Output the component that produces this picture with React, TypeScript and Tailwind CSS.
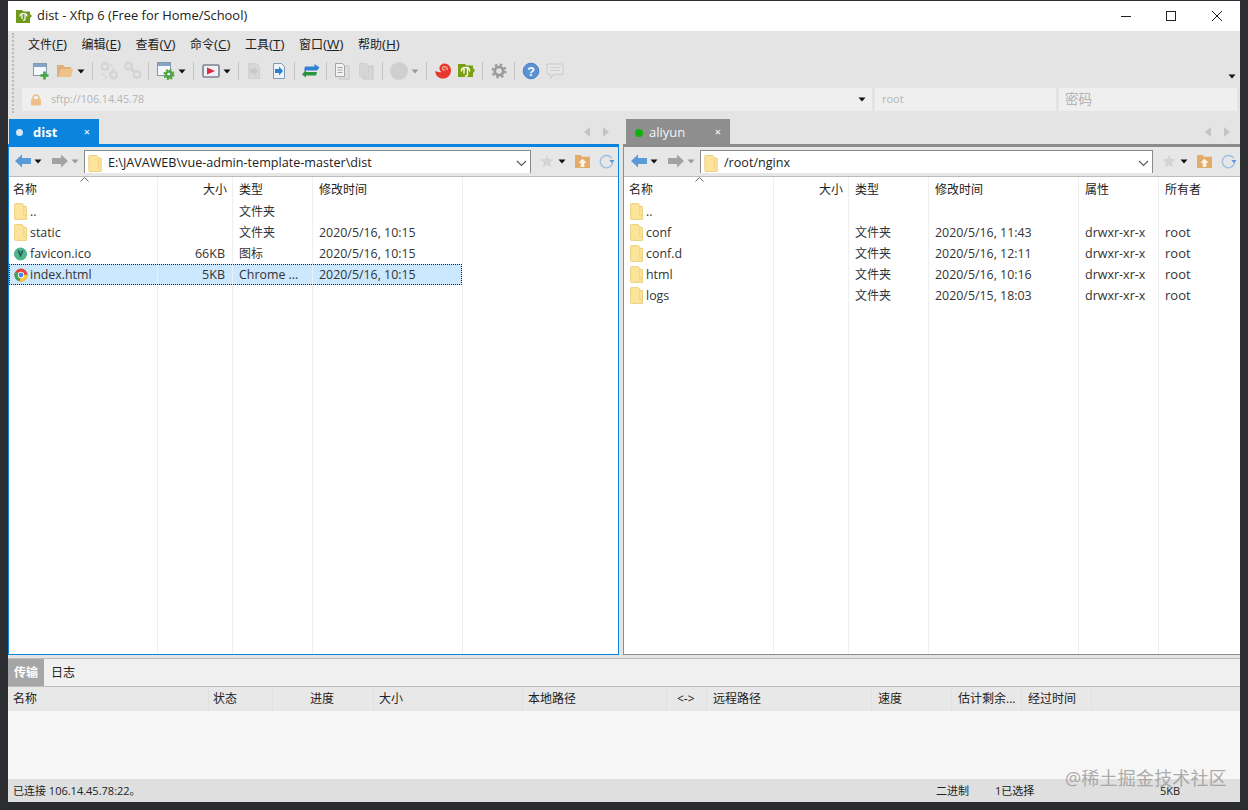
import React from "react";

const Folder = ({ className = "", w = 14, h = 18 }: { className?: string; w?: number; h?: number }) => (
  <svg width={w} height={h} viewBox="0 0 14 18" className={className}>
    <path d="M1.500.5H9l1.500 2v1H13.500v14h-12a1 1 0 0 1-1-1v-15a1 1 0 0 1 1-1z" fill="#fde49c" stroke="#e9cd7c" />
    <path d="M10.500 3.500v10h3" fill="none" stroke="#ecd27f" />
  </svg>
);

const Caret = ({ gray = false }: { gray?: boolean }) => (
  <svg width="8" height="5" viewBox="0 0 8 5"><path d="M.5.5h7L4 4.500z" fill={gray ? "#9a9a9a" : "#111"} /></svg>
);

const Sep = ({ className = "" }: { className?: string }) => <div className={`h-[18px] w-px bg-[#c4c4c4] ${className}`} />;

const NewIcon = () => (
  <svg width="20" height="20" viewBox="0 0 20 20">
    <rect x="3.500" y="2.500" width="13" height="12" fill="#f4f7fb" stroke="#8497ad" />
    <rect x="4" y="3" width="12" height="3" fill="#85a3c5" />
    <path d="M14.500 10.500v8M10.500 14.500h8" stroke="#3aa83a" strokeWidth="2.600" />
  </svg>
);
const OpenIcon = () => (
  <svg width="20" height="20" viewBox="0 0 20 20">
    <path d="M2 4h6l2 2h6v2H6l-2 8H2z" fill="#dcae78" />
    <path d="M6 8h12l-2 8H3z" fill="#eec08a" />
  </svg>
);
const LinkBroken = () => (
  <svg width="20" height="20" viewBox="0 0 20 20">
    <g fill="none" stroke="#d4d4d4">
      <circle cx="6" cy="5.500" r="3.300" strokeWidth="2.400" />
      <circle cx="14.500" cy="14" r="3.300" strokeWidth="2.400" />
      <path d="M11.500 4.500l2-1M13 8h2.500M3 13.500h2.500M6 17l2-1.500" strokeWidth="1.600" />
    </g>
  </svg>
);
const LinkJoined = () => (
  <svg width="20" height="20" viewBox="0 0 20 20">
    <g fill="none" stroke="#d4d4d4">
      <circle cx="5.500" cy="5" r="3.300" strokeWidth="2.400" />
      <circle cx="14" cy="13.500" r="3.300" strokeWidth="2.400" />
      <path d="M8 7.500l3.500 3.500" strokeWidth="2.600" />
    </g>
  </svg>
);
const SessionGear = () => (
  <svg width="20" height="20" viewBox="0 0 20 20">
    <rect x="1.500" y="1.500" width="13" height="13" fill="#f4f7fb" stroke="#8497ad" />
    <rect x="2" y="2" width="12" height="3" fill="#85a3c5" />
    <circle cx="13" cy="13.500" r="3" fill="none" stroke="#4ea53c" strokeWidth="2.400" />
    <circle cx="13" cy="13.500" r="4.800" fill="none" stroke="#4ea53c" strokeWidth="1.500" strokeDasharray="2 1.770" />
  </svg>
);
const Play = () => (
  <svg width="20" height="20" viewBox="0 0 20 20">
    <rect x="2" y="4" width="16" height="12" rx="1.500" fill="#eef0f3" stroke="#7b828c" strokeWidth="1.600" />
    <path d="M6 6.500l8 3.500-8 3.500z" fill="#dc2a42" />
  </svg>
);
const Doc = ({ active = false }: { active?: boolean }) => (
  <svg width="20" height="20" viewBox="0 0 20 20">
    <path d="M4.500 2.500h8l3 3v12h-11z" fill={active ? "#eef3f9" : "#d8d8d8"} stroke={active ? "#7d98b8" : "#d0d0d0"} />
    <path d="M6 8h4V5.500l4 4.500-4 4.500V12H6z" fill={active ? "#2f7fd0" : "#c8c8c8"} />
  </svg>
);
const Transfer = () => (
  <svg width="20" height="20" viewBox="0 0 20 20">
    <path d="M4 5.500h9.500V3l5 3.500-2.500 3H3z" fill="#2f83d4" />
    <path d="M16 11H5V8.800L1 13.500 5 16.500V14.500h10z" fill="#27953f" />
  </svg>
);
const Copy = ({ filled = false }: { filled?: boolean }) => (
  <svg width="20" height="20" viewBox="0 0 20 20">
    <rect x="7" y="5" width="10" height="13" fill={filled ? "#d6d6d6" : "#dedede"} stroke="#c8c8c8" />
    <path d="M3.500 2.500h7l2 2v11h-9z" fill={filled ? "#d6d6d6" : "#f2f2f2"} stroke={filled ? "#d0d0d0" : "#a5a5a5"} />
    {!filled && <path d="M5.500 6.500h5M5.500 9h5M5.500 11.500h5" stroke="#a5a5a5" />}
  </svg>
);
const Snail = () => (
  <svg width="20" height="20" viewBox="0 0 20 20">
    <path d="M2 10c.5 3.500 2.500 7 7 7.500 5 .5 9-3 9-8 0-4-3-7-6.500-7-3 0-5.500 2.500-5 5.500.2 1.500 1 2.500 2 3-2.500.5-4.500 0-6.500-1z" fill="#e6392c" />
    <path d="M14.500 9c0-2-1.500-3.500-3.300-3.300C9.500 5.900 9 7.500 10 8.600c.8.800 2 .5 2.200-.5" fill="none" stroke="#f7b3a6" strokeWidth="1.200" />
  </svg>
);
const GreenFolder = () => (
  <svg width="20" height="20" viewBox="0 0 20 20">
    <path d="M2 3h7l1.500 1.500H17V7l2 2.500-2 2.500v4H2z" fill="#7a9f14" />
    <path d="M8 7.500v5M11.500 7v6.500c0 1.200-1.300 1.800-2.500 1.300M5.500 10.500C5 8.500 6.500 6.500 9 6.500h1.500c2 0 3.500 1.800 3 4" fill="none" stroke="#fff" strokeWidth="1.400" />
  </svg>
);
const Gear = () => (
  <svg width="20" height="20" viewBox="0 0 20 20">
    <circle cx="10" cy="10" r="4.200" fill="none" stroke="#9b9b9b" strokeWidth="2.800" />
    <circle cx="10" cy="10" r="6.500" fill="none" stroke="#9b9b9b" strokeWidth="2" strokeDasharray="2.550 2.550" />
  </svg>
);
const Help = () => (
  <svg width="20" height="20" viewBox="0 0 20 20">
    <circle cx="10" cy="10" r="7.800" fill="#5c92d2" stroke="#4a80c2" />
    <text x="10" y="14.500" textAnchor="middle" fontSize="12.500" fontWeight="700" fill="#fff" fontFamily="Liberation Sans, sans-serif">?</text>
  </svg>
);
const Chat = () => (
  <svg width="20" height="20" viewBox="0 0 20 20">
    <path d="M3.500 3h13a1.500 1.500 0 0 1 1.500 1.500V12a1.500 1.500 0 0 1-1.500 1.500H9L5.500 17v-3.500h-2A1.500 1.500 0 0 1 2 12V4.500A1.500 1.500 0 0 1 3.500 3z" fill="#e6e6e6" stroke="#d2d2d2" strokeWidth="1.400" />
    <path d="M5 6.500h10M5 9.500h10" stroke="#d2d2d2" />
  </svg>
);
const ArrowL = ({ c }: { c: string }) => (
  <svg width="16" height="14" viewBox="0 0 16 14"><path d="M0 7l7-6.500V4h9v6H7v3.500z" fill={c} /></svg>
);
const ArrowR = ({ c }: { c: string }) => (
  <svg width="16" height="14" viewBox="0 0 16 14"><path d="M16 7L9 .5V4H0v6h9v3.500z" fill={c} /></svg>
);
const Chevron = () => (
  <svg width="11" height="7" viewBox="0 0 11 7"><path d="M1 1l4.500 4.500L10 1" fill="none" stroke="#555" strokeWidth="1.100" /></svg>
);
const Star = () => (
  <svg width="14" height="14" viewBox="0 0 16 16"><path d="M8 .8l2.200 4.900 5.300.6-4 3.500 1.200 5.300L8 12.300l-4.700 2.800 1.200-5.300-4-3.500 5.300-.6z" fill="#d4d4d4" /></svg>
);
const FolderUp = () => (
  <svg width="15" height="14" viewBox="0 0 16 15">
    <path d="M0 1h6l1.500 2H16v12H0z" fill="#e2ab68" />
    <path d="M8 5l4.500 4.500H10V14H6V9.500H3.500z" fill="#fdf4e6" />
  </svg>
);
const Refresh = () => (
  <svg width="15" height="15" viewBox="0 0 16 16">
    <path d="M13.500 4.500A6.600 6.600 0 1 0 14.500 9.500" fill="none" stroke="#9dbfe3" strokeWidth="1.500" />
    <path d="M11 6.500h5.500L14 10z" fill="#5a98dc" />
  </svg>
);
const Vue = () => (
  <svg width="14" height="14" viewBox="0 0 14 14">
    <circle cx="6.500" cy="7" r="6.500" fill="#4ab68a" />
    <path d="M3.500 3.500h1.800L6.500 7l1.200-3.500h1.800L6.500 10.500z" fill="#35495e" />
  </svg>
);
const ChromeIcon = () => (
  <svg width="14" height="14" viewBox="0 0 15 15">
    <circle cx="7.500" cy="7.500" r="7" fill="#e3443a" />
    <path d="M7.500 7.500L1.400 4.100A7 7 0 0 0 6 14.300z" fill="#3ba55d" />
    <path d="M7.500 7.500l7-.4a7 7 0 0 1-8.500 7.200z" fill="#f7c933" />
    <circle cx="7.500" cy="7.500" r="3.400" fill="#fff" />
    <circle cx="7.500" cy="7.500" r="2.600" fill="#4a86e8" />
  </svg>
);

type Row = { name: string; icon?: React.ReactNode; size?: string; type?: string; time?: string; attr?: string; owner?: string; sel?: boolean };

const leftRows: Row[] = [
  { name: "..", type: "文件夹" },
  { name: "static", type: "文件夹", time: "2020/5/16, 10:15" },
  { name: "favicon.ico", icon: <Vue />, size: "66KB", type: "图标", time: "2020/5/16, 10:15" },
  { name: "index.html", icon: <ChromeIcon />, size: "5KB", type: "Chrome ...", time: "2020/5/16, 10:15", sel: true },
];
const rightRows: Row[] = [
  { name: ".." },
  { name: "conf", type: "文件夹", time: "2020/5/16, 11:43", attr: "drwxr-xr-x", owner: "root" },
  { name: "conf.d", type: "文件夹", time: "2020/5/16, 12:11", attr: "drwxr-xr-x", owner: "root" },
  { name: "html", type: "文件夹", time: "2020/5/16, 10:16", attr: "drwxr-xr-x", owner: "root" },
  { name: "logs", type: "文件夹", time: "2020/5/15, 18:03", attr: "drwxr-xr-x", owner: "root" },
];

const line = "border-r border-[#efefef]";

const Cell = ({ w, children, className = "" }: { w: string; children?: React.ReactNode; className?: string }) => (
  <div className={`${w} shrink-0 h-full ${line} flex items-center whitespace-nowrap overflow-hidden ${className}`}>{children}</div>
);

const Pane = ({ rows, path, right }: { rows: Row[]; path: string; right?: boolean }) => {
  const w1 = right ? "w-[150px]" : "w-[149px]";
  const w2 = "w-[75px]";
  const w3 = "w-[80px]";
  const w4 = "w-[150px]";
  const w5 = "w-[80px]";
  return (
    <div className="flex flex-col h-full bg-white">
      <div className="h-[30px] flex items-center bg-[#e7e7e7] shrink-0 border-b border-[#bdbdbd] pb-[1px]">
        <div className={right ? "ml-[7px]" : "ml-[6px]"}><ArrowL c="#5b9ad8" /></div>
        <div className="ml-[3px]"><Caret /></div>
        <div className="ml-[10px]"><ArrowR c="#a3a3a3" /></div>
        <div className="ml-[3px]"><Caret gray /></div>
        <div className={`ml-[5px] ${right ? "w-[453px]" : "w-[447px]"} h-[23px] bg-white border-l border-t border-r border-[#8a8a8a] flex items-center pt-[3px]`}>
          <Folder className="ml-[3px]" h={17} />
          <span className="ml-[6px] text-[12.600px] text-[#222]">{path}</span>
          <span className="ml-auto mr-[3px]"><Chevron /></span>
        </div>
        <div className="ml-[9px]"><Star /></div>
        <div className="ml-[4px]"><Caret /></div>
        <div className="ml-[9px]"><FolderUp /></div>
        <div className="ml-[9px]"><Refresh /></div>
      </div>
      <div className="h-[24px] flex shrink-0 text-[12px] text-[#222] relative">
        <Cell w={w1} className={`pt-[1px] ${right ? "pl-[5px]" : "pl-[4px]"}`}>名称</Cell>
        <svg width="9" height="5" viewBox="0 0 9 5" className="absolute left-[71px] top-[0px]"><path d="M.5 4.500l4-4 4 4" fill="none" stroke="#666" /></svg>
        <Cell w={w2} className="justify-end pr-[5px] pt-[1px]">大小</Cell>
        <Cell w={w3} className="pl-[6px] pt-[1px]">类型</Cell>
        <Cell w={w4} className="pl-[6px] pt-[1px]">修改时间</Cell>
        {right && <Cell w={w5} className="pl-[6px] pt-[1px]">属性</Cell>}
        {right && <div className="pl-[6px] pt-[1px] flex items-center">所有者</div>}
      </div>
      {rows.map((r) => (
        <div key={r.name} className={`h-[21px] flex shrink-0 text-[12px] text-[#333] ${r.sel ? "bg-[#cce8ff] outline-1 outline-dotted outline-offset-[-1px] outline-[#222] w-[453px]" : ""}`}>
          <Cell w={w1} className={`${right ? "pl-[6px]" : "pl-[5px]"} ${r.sel ? "border-[#b8dcf5]" : ""}`}>
            <span className="w-[16px] flex justify-start">{r.icon ?? <Folder w={13} h={17} />}</span>
            <span className="text-[12.400px] pt-[2px]">{r.name}</span>
          </Cell>
          <Cell w={w2} className={`justify-end pr-[7px] pt-[2px] text-[12.500px] ${r.sel ? "border-[#b8dcf5]" : ""}`}>{r.size}</Cell>
          <Cell w={w3} className={`pl-[6px] ${r.sel ? "border-[#b8dcf5] text-[12.400px] pt-[2px]" : ""}`}>{r.type}</Cell>
          <Cell w={w4} className={`pl-[6px] pt-[2px] text-[12.400px] ${r.sel ? "border-transparent" : ""}`}>{r.time}</Cell>
          {right && <Cell w={w5} className="pl-[6px] pt-[2px] text-[12.500px]">{r.attr}</Cell>}
          {right && <div className="pl-[6px] flex items-center text-[13px]">{r.owner}</div>}
        </div>
      ))}
      <div className="flex-1 flex min-h-0">
        <div className={`${w1} ${line}`} />
        <div className={`${w2} ${line}`} />
        <div className={`${w3} ${line}`} />
        <div className={`${w4} ${line}`} />
        {right && <div className={`${w5} ${line}`} />}
      </div>
    </div>
  );
};

const TabNav = () => (
  <div className="flex gap-[13px] items-center">
    <svg width="6" height="10" viewBox="0 0 6 10"><path d="M6 0v10L0 5z" fill="#c4c4c4" /></svg>
    <svg width="6" height="10" viewBox="0 0 6 10"><path d="M0 0v10l6-5z" fill="#c4c4c4" /></svg>
  </div>
);

const Th = ({ w, children, className = "" }: { w: string; children?: React.ReactNode; className?: string }) => (
  <div className={`${w} shrink-0 h-full border-r border-[#e0e0e0] flex items-center whitespace-nowrap ${className}`}>{children}</div>
);

const M = ({ a, k }: { a: string; k: string }) => (
  <span>{a}<span className="text-[13.500px]">(<span className="underline">{k}</span>)</span></span>
);

export default function App() {
  return (
    <div className="w-[1248px] h-[810px] bg-[#2b2d30] pt-px px-[8px] overflow-hidden relative" style={{ fontFamily: '"Open Sans", "Noto Sans CJK SC", sans-serif' }}>
      <div className="h-[801px] flex flex-col bg-[#e4e4e4]">
        {/* title */}
        <div className="h-[30px] bg-white flex items-center shrink-0">
          <svg width="16" height="14" viewBox="0 0 16 14" className="ml-[8px]">
            <path d="M0 1h6l1.500 1.500H14V5l2 2-2 2v5H0z" fill="#6f9a1c" />
            <path d="M6 5v5M9 4.500v5.500c0 1-1 1.500-2 1M3.800 7.500c0-1.800 1.200-3 2.700-3h1.800c1.500 0 2.700 1.200 2.700 3" fill="none" stroke="#fff" strokeWidth="1.200" />
          </svg>
          <span className="ml-[5px] text-[12.900px] text-[#222]">dist - Xftp 6 (Free for Home/School)</span>
          <div className="ml-auto flex items-center">
            <svg width="10" height="10" viewBox="0 0 10 10" className="mr-[35px]"><path d="M0 5.500h10" stroke="#222" /></svg>
            <svg width="10" height="10" viewBox="0 0 10 10" className="mr-[36px]"><rect x=".5" y=".5" width="9" height="9" fill="none" stroke="#222" /></svg>
            <svg width="10" height="10" viewBox="0 0 10 10" className="mr-[18px]"><path d="M0 0l10 10M10 0L0 10" stroke="#222" /></svg>
          </div>
        </div>
        {/* menu + toolbar */}
        <div className="relative shrink-0">
          <div className="absolute left-[4px] top-[2px] h-[80px] border-l-2 border-dotted border-[#bdbdbd]" />
          <div className="h-[26px] flex items-center pl-[20px] gap-[14.500px] text-[12px] text-[#222]">
            <M a="文件" k="F" />
            <M a="编辑" k="E" />
            <M a="查看" k="V" />
            <M a="命令" k="C" />
            <M a="工具" k="T" />
            <M a="窗口" k="W" />
            <M a="帮助" k="H" />
          </div>
          <div className="h-[31px] flex items-center pl-[22px] pb-[3px] relative">
            <NewIcon />
            <div className="ml-[5px]"><OpenIcon /></div>
            <div className="ml-[2px]"><Caret /></div>
            <Sep className="ml-[7px]" />
            <div className="ml-[6px]"><LinkBroken /></div>
            <div className="ml-[4px]"><LinkJoined /></div>
            <Sep className="ml-[5px]" />
            <div className="ml-[7px]"><SessionGear /></div>
            <div className="ml-[2px]"><Caret /></div>
            <Sep className="ml-[7px]" />
            <div className="ml-[7px]"><Play /></div>
            <div className="ml-[2px]"><Caret /></div>
            <Sep className="ml-[7px]" />
            <div className="ml-[5px]"><Doc /></div>
            <div className="ml-[5px]"><Doc active /></div>
            <Sep className="ml-[5px]" />
            <div className="ml-[6px]"><Transfer /></div>
            <Sep className="ml-[5px]" />
            <div className="ml-[5px]"><Copy /></div>
            <div className="ml-[4px]"><Copy filled /></div>
            <Sep className="ml-[6px]" />
            <div className="ml-[7px] w-[18px] h-[18px] my-[1px] mr-[1px] rounded-full bg-[#cfcfcf]" />
            <div className="ml-[2px]"><Caret gray /></div>
            <Sep className="ml-[7px]" />
            <div className="ml-[6px]"><Snail /></div>
            <div className="ml-[3px]"><GreenFolder /></div>
            <Sep className="ml-[6px]" />
            <div className="ml-[6px]"><Gear /></div>
            <Sep className="ml-[5px]" />
            <div className="ml-[6px]"><Help /></div>
            <div className="ml-[4px]"><Chat /></div>
            <div className="absolute right-[4px] top-[17px]"><Caret /></div>
          </div>
          {/* address */}
          <div className="h-[23px] flex pl-[14px] pr-[3px] gap-[3px] text-[11px] text-[#b4b4b4]">
            <div className="w-[850px] bg-[#efefef] flex items-center pl-[8px]">
              <svg width="12" height="12" viewBox="0 0 12 12"><path d="M3 6V4a3 3 0 0 1 6 0v2" fill="none" stroke="#eebf88" strokeWidth="1.500" /><rect x="1" y="5" width="10" height="6.500" rx="1" fill="#eebf88" /></svg>
              <span className="ml-[9px] text-[10.700px]">sftp://106.14.45.78</span>
              <span className="ml-auto mr-[6px]"><Caret /></span>
            </div>
            <div className="w-[181px] bg-[#efefef] flex items-center pl-[7px]">root</div>
            <div className="flex-1 bg-[#efefef] flex items-center pl-[6px] text-[13.500px]">密码</div>
          </div>
        </div>
        {/* panes */}
        <div className="flex-1 min-h-0 flex gap-[4px] pt-[8px]">
          <div className="w-[611px] flex flex-col">
            <div className="h-[25px] flex items-end pl-px shrink-0">
              <div className="w-[90px] h-[25px] bg-[#0a84dc] text-white flex items-center pl-[7px] pt-[2px]">
                <span className="w-[7px] h-[7px] rounded-full bg-[#d5e7f7]" />
                <span className="ml-[10px] text-[13px] font-bold">dist</span>
                <span className="ml-auto mr-[9px] text-[11px]">×</span>
              </div>
              <div className="ml-auto mr-[10px] self-center"><TabNav /></div>
            </div>
            <div className="flex-1 min-h-0 border-x border-b border-t-[3px] border-[#0a84dc]">
              <Pane rows={leftRows} path="E:\JAVAWEB\vue-admin-template-master\dist" />
            </div>
          </div>
          <div className="flex-1 flex flex-col">
            <div className="h-[25px] flex items-end pl-[3px] shrink-0">
              <div className="w-[104px] h-[25px] bg-[#8e8e8e] text-white flex items-center pl-[9px] pt-[2px]">
                <span className="w-[8px] h-[8px] rounded-full bg-[#11b011]" />
                <span className="ml-[6px] text-[13px] text-[#f4f4f4]">aliyun</span>
                <span className="ml-auto mr-[9px] text-[11px]">×</span>
              </div>
              <div className="ml-auto mr-[10px] self-center"><TabNav /></div>
            </div>
            <div className="flex-1 min-h-0 border-l border-b border-t-[3px] border-[#8c8c8c]">
              <Pane rows={rightRows} path="/root/nginx" right />
            </div>
          </div>
        </div>
        {/* transfer */}
        <div className="shrink-0 h-[147px] flex flex-col bg-[#f6f6f6]">
          <div className="h-[32px] shrink-0 pt-[3px] bg-[#e4e4e4] flex flex-col">
            <div className="flex-1 bg-[#f0f0f0] border-y border-[#bcbcbc] flex text-[12px] text-[#222]">
              <div className="w-[36px] bg-[#a6a6a6] text-white flex items-center justify-center font-bold">传输</div>
              <div className="ml-[7px] flex items-center">日志</div>
            </div>
          </div>
          <div className="h-[24px] shrink-0 bg-[#e8e8e8] flex text-[12px] text-[#222]">
            <Th w="w-[201px]" className="pl-[5px]">名称</Th>
            <Th w="w-[64px]" className="pl-[4px]">状态</Th>
            <Th w="w-[101px]" className="pl-[37px]">进度</Th>
            <Th w="w-[149px]" className="pl-[5px]">大小</Th>
            <Th w="w-[144px]" className="pl-[5px]">本地路径</Th>
            <Th w="w-[40px]" className="pl-[10px]">{"<->"}</Th>
            <Th w="w-[165px]" className="pl-[6px]">远程路径</Th>
            <Th w="w-[80px]" className="pl-[6px]">速度</Th>
            <Th w="w-[70px]" className="pl-[6px]">估计剩余...</Th>
            <Th w="w-[70px]" className="pl-[6px]">经过时间</Th>
          </div>
          <div className="flex-1" />
          <div className="h-[23px] shrink-0 bg-[#dfdfdf] flex items-center pt-[1px] text-[11px] text-[#222]">
            <span className="ml-[5px]">已连接 106.14.45.78:22。</span>
            <span className="ml-auto w-[59px]">二进制</span>
            <span className="w-[165px]">1已选择</span>
            <span className="w-[80px]">5KB</span>
          </div>
        </div>
      </div>
      <div className="absolute left-[1065px] top-[765px] text-[18px] text-[#9a9a9a] opacity-80 tracking-[0.2px]">@稀土掘金技术社区</div>
    </div>
  );
}
